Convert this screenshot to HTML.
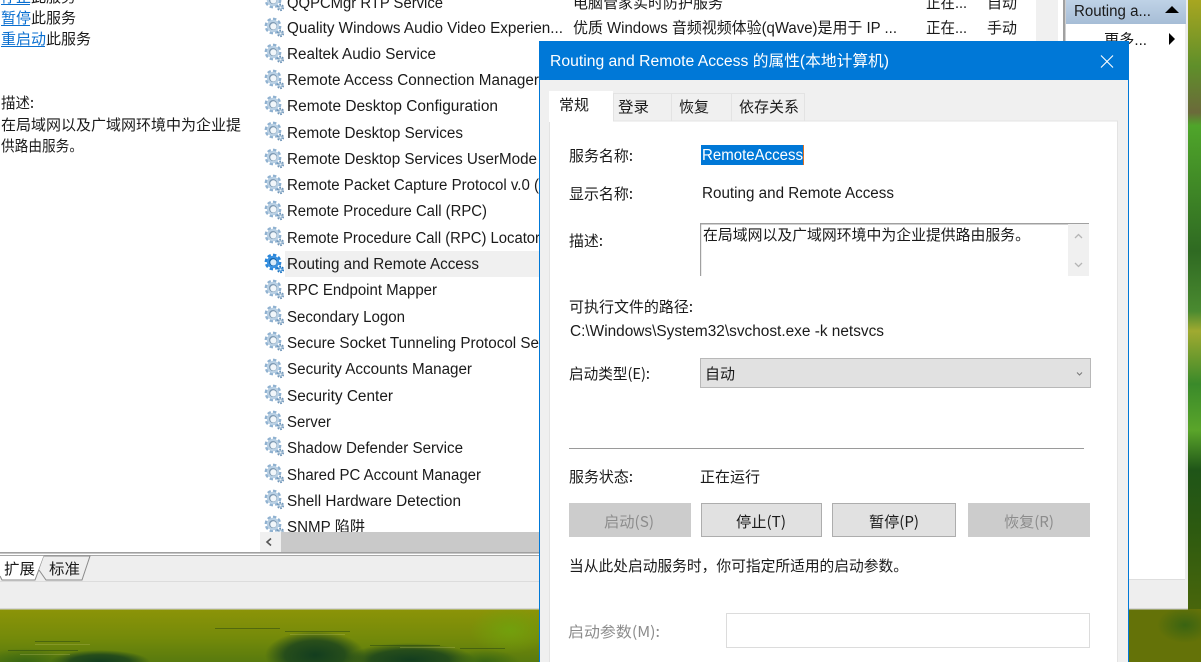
<!DOCTYPE html>
<html lang="zh-CN"><head><meta charset="utf-8"><title>Routing and Remote Access</title>
<style>
html,body{margin:0;padding:0;width:1201px;height:662px;overflow:hidden;background:#fff}
svg{display:block}
text{font-family:"Liberation Sans","Noto Sans CJK SC",sans-serif;font-size:15.5px;fill:#1a1a1a}
.c{font-family:"Noto Sans CJK SC","Liberation Sans",sans-serif;font-size:15px}
.g{fill:#8c8c8c}
.l{fill:#0a6fd0}
</style></head><body>
<svg width="1201" height="662" viewBox="0 0 1201 662" xmlns="http://www.w3.org/2000/svg">
<defs>
<linearGradient id="gr" x1="0" y1="0" x2="0" y2="1">
<stop offset="0" stop-color="#a8a620"/><stop offset=".1" stop-color="#5f8f2a"/><stop offset=".17" stop-color="#6b6a3a"/><stop offset=".19" stop-color="#4fa52a"/><stop offset=".38" stop-color="#2f6a22"/><stop offset=".47" stop-color="#4a8a30"/><stop offset=".5" stop-color="#a0aa30"/><stop offset=".58" stop-color="#3a8a2a"/><stop offset=".65" stop-color="#5aa52a"/><stop offset=".71" stop-color="#1f5518"/><stop offset=".8" stop-color="#2d5a10"/><stop offset="1" stop-color="#5a6d08"/>
</linearGradient>
<linearGradient id="gb" x1="0" y1="0" x2="0" y2="1"><stop offset="0" stop-color="#8c9408"/><stop offset=".55" stop-color="#748a0a"/><stop offset="1" stop-color="#587a0e"/></linearGradient>
<linearGradient id="hd" x1="0" y1="0" x2="0" y2="1"><stop offset="0" stop-color="#bfd2e6"/><stop offset="1" stop-color="#a6bdd6"/></linearGradient>
<radialGradient id="dk"><stop offset="0" stop-color="#0f3a20" stop-opacity=".95"/><stop offset=".6" stop-color="#123c1f" stop-opacity=".75"/><stop offset="1" stop-color="#123c1f" stop-opacity="0"/></radialGradient>
<radialGradient id="md"><stop offset="0" stop-color="#2f6014" stop-opacity=".8"/><stop offset="1" stop-color="#2f6014" stop-opacity="0"/></radialGradient>
<radialGradient id="br"><stop offset="0" stop-color="#72a00c"/><stop offset="1" stop-color="#72a00c" stop-opacity="0"/></radialGradient>
<filter id="s" x="-10%" y="-10%" width="120%" height="120%"><feGaussianBlur stdDeviation="0.35"/></filter>
<g id="gear" filter="url(#s)">
<circle cx="9" cy="9" r="6.8" fill="none" stroke="#8fb1d0" stroke-width="3.2" stroke-dasharray="3.2 2.1"/>
<circle cx="9" cy="9" r="6.2" fill="#b9d0e4"/>
<circle cx="9" cy="9" r="4" fill="#7f9ab3"/>
<circle cx="9.4" cy="9.4" r="3.1" fill="#f1f6fa"/>
<circle cx="16.5" cy="16.5" r="2.6" fill="none" stroke="#6f95b8" stroke-width="2" stroke-dasharray="1.6 1.1"/>
<circle cx="16.5" cy="16.5" r="2.2" fill="#98b6d0"/>
<circle cx="16.5" cy="16.5" r="1" fill="#eaf1f7"/>
</g>
<g id="gearb" filter="url(#s)">
<circle cx="9" cy="9" r="6.8" fill="none" stroke="#2a86d9" stroke-width="3.2" stroke-dasharray="3.2 2.1"/>
<circle cx="9" cy="9" r="6.2" fill="#3a93e2"/>
<circle cx="9" cy="9" r="4" fill="#1566ae"/>
<circle cx="9.4" cy="9.4" r="3.1" fill="#d8ebfa"/>
<circle cx="16.5" cy="16.5" r="2.6" fill="none" stroke="#1f72bd" stroke-width="2" stroke-dasharray="1.6 1.1"/>
<circle cx="16.5" cy="16.5" r="2.2" fill="#4595da"/>
<circle cx="16.5" cy="16.5" r="1" fill="#e0effa"/>
</g>
<clipPath id="list"><rect x="260" y="0" width="800" height="532"/></clipPath>
<clipPath id="wall"><rect x="0" y="609" width="1201" height="53"/></clipPath>
</defs>

<!-- wallpaper -->
<rect x="1180" y="0" width="21" height="662" fill="url(#gr)"/>
<rect x="0" y="609" width="540" height="53" fill="url(#gb)"/>
<rect x="1129" y="609" width="72" height="53" fill="#647208"/>
<g clip-path="url(#wall)">
<ellipse cx="100" cy="662" rx="50" ry="12" fill="url(#dk)"/>
<ellipse cx="315" cy="655" rx="50" ry="24" fill="url(#dk)"/>
<ellipse cx="410" cy="660" rx="65" ry="17" fill="url(#dk)"/>
<ellipse cx="485" cy="662" rx="35" ry="12" fill="url(#md)"/>
<ellipse cx="25" cy="662" rx="45" ry="14" fill="url(#md)"/>
<ellipse cx="510" cy="630" rx="40" ry="24" fill="url(#br)"/>
<ellipse cx="1185" cy="625" rx="28" ry="18" fill="url(#md)"/>
<g fill="#1e3d14" opacity=".45">
<rect x="35" y="641" width="45" height="1"/><rect x="8" y="650" width="70" height="1"/>
<rect x="285" y="631" width="65" height="1"/><rect x="215" y="628" width="65" height="1"/>
<rect x="370" y="645" width="70" height="1"/><rect x="460" y="648" width="45" height="1"/>
</g>
<g fill="#b9c06a" opacity=".3">
<rect x="35" y="644" width="55" height="1"/><rect x="290" y="634" width="55" height="1"/><rect x="400" y="647" width="55" height="1"/><rect x="20" y="654" width="50" height="1"/>
</g>
</g>

<!-- main window -->
<rect x="0" y="0" width="1185" height="609" fill="#fff"/>
<rect x="1185" y="0" width="3" height="609" fill="#ececec"/>
<rect x="1036" y="0" width="22" height="552" fill="#f0f0f0"/>
<rect x="1063" y="0" width="2.500" height="582" fill="#a0a0a0"/>
<rect x="1066" y="0" width="120" height="24" fill="url(#hd)"/>

<!-- left panel -->
<text x="1" y="2" class="c" textLength="75" lengthAdjust="spacingAndGlyphs"><tspan class="l">停止</tspan>此服务</text>
<rect x="1" y="4" width="29" height="1" fill="#0a6fd0"/>
<text x="1" y="23" class="c" textLength="75" lengthAdjust="spacingAndGlyphs"><tspan class="l">暂停</tspan>此服务</text>
<rect x="1" y="25" width="29" height="1" fill="#0a6fd0"/>
<text x="1" y="44" class="c" textLength="90" lengthAdjust="spacingAndGlyphs"><tspan class="l">重启动</tspan>此服务</text>
<rect x="1" y="46" width="44" height="1" fill="#0a6fd0"/>
<text x="1" y="108" class="c" textLength="33" lengthAdjust="spacingAndGlyphs">描述:</text>
<text x="1" y="130" class="c" textLength="240" lengthAdjust="spacingAndGlyphs">在局域网以及广域网环境中为企业提</text>
<text x="1" y="151" class="c" textLength="82" lengthAdjust="spacingAndGlyphs">供路由服务。</text>

<!-- list -->
<g clip-path="url(#list)">
<rect x="285" y="251" width="260" height="26" fill="#f0f0f0"/>
<use href="#gear" x="264" y="-9"/><use href="#gear" x="264" y="17"/><use href="#gear" x="264" y="43"/><use href="#gear" x="264" y="69"/><use href="#gear" x="264" y="95"/><use href="#gear" x="264" y="121"/><use href="#gear" x="264" y="148"/><use href="#gear" x="264" y="174"/><use href="#gear" x="264" y="200"/><use href="#gear" x="264" y="226"/><use href="#gearb" x="264" y="253"/><use href="#gear" x="264" y="279"/><use href="#gear" x="264" y="305"/><use href="#gear" x="264" y="331"/><use href="#gear" x="264" y="358"/><use href="#gear" x="264" y="384"/><use href="#gear" x="264" y="410"/><use href="#gear" x="264" y="436"/><use href="#gear" x="264" y="463"/><use href="#gear" x="264" y="489"/><use href="#gear" x="264" y="515"/>
<text x="287" y="8" textLength="156" lengthAdjust="spacingAndGlyphs">QQPCMgr RTP Service</text>
<text x="287" y="33" textLength="276" lengthAdjust="spacingAndGlyphs">Quality Windows Audio Video Experien...</text>
<text x="287" y="59" textLength="149" lengthAdjust="spacingAndGlyphs">Realtek Audio Service</text>
<text x="287" y="85" textLength="252" lengthAdjust="spacingAndGlyphs">Remote Access Connection Manager</text>
<text x="287" y="111" textLength="211" lengthAdjust="spacingAndGlyphs">Remote Desktop Configuration</text>
<text x="287" y="138" textLength="176" lengthAdjust="spacingAndGlyphs">Remote Desktop Services</text>
<text x="287" y="164" textLength="250" lengthAdjust="spacingAndGlyphs">Remote Desktop Services UserMode</text>
<text x="287" y="190" textLength="252" lengthAdjust="spacingAndGlyphs">Remote Packet Capture Protocol v.0 (</text>
<text x="287" y="216" textLength="200" lengthAdjust="spacingAndGlyphs">Remote Procedure Call (RPC)</text>
<text x="287" y="243" textLength="253" lengthAdjust="spacingAndGlyphs">Remote Procedure Call (RPC) Locator</text>
<text x="287" y="269" textLength="192" lengthAdjust="spacingAndGlyphs">Routing and Remote Access</text>
<text x="287" y="295" textLength="150" lengthAdjust="spacingAndGlyphs">RPC Endpoint Mapper</text>
<text x="287" y="322" textLength="118" lengthAdjust="spacingAndGlyphs">Secondary Logon</text>
<text x="287" y="348" textLength="252" lengthAdjust="spacingAndGlyphs">Secure Socket Tunneling Protocol Se</text>
<text x="287" y="374" textLength="185" lengthAdjust="spacingAndGlyphs">Security Accounts Manager</text>
<text x="287" y="401" textLength="106" lengthAdjust="spacingAndGlyphs">Security Center</text>
<text x="287" y="427" textLength="44" lengthAdjust="spacingAndGlyphs">Server</text>
<text x="287" y="453" textLength="176" lengthAdjust="spacingAndGlyphs">Shadow Defender Service</text>
<text x="287" y="480" textLength="194" lengthAdjust="spacingAndGlyphs">Shared PC Account Manager</text>
<text x="287" y="506" textLength="174" lengthAdjust="spacingAndGlyphs">Shell Hardware Detection</text>
<text x="287" y="532" textLength="78" lengthAdjust="spacingAndGlyphs">SNMP 陷阱</text>
<text x="573" y="8" class="c" textLength="150" lengthAdjust="spacingAndGlyphs">电脑管家实时防护服务</text>
<text x="573" y="33" textLength="324" lengthAdjust="spacingAndGlyphs">优质 Windows 音频视频体验(qWave)是用于 IP ...</text>
<text x="926" y="8" textLength="41" lengthAdjust="spacingAndGlyphs">正在...</text>
<text x="926" y="33" textLength="41" lengthAdjust="spacingAndGlyphs">正在...</text>
<text x="987" y="8" class="c" textLength="30" lengthAdjust="spacingAndGlyphs">自动</text>
<text x="987" y="33" class="c" textLength="30" lengthAdjust="spacingAndGlyphs">手动</text>
</g>

<!-- h scrollbar -->
<rect x="260" y="532" width="800" height="20" fill="#c9c9c9"/>
<rect x="260" y="532" width="21" height="20" fill="#f0f0f0"/>
<path d="M271 538.500l-4 3.500 4 3.500" fill="none" stroke="#555" stroke-width="1.600"/>

<!-- tabs & status -->
<rect x="0" y="552" width="1060" height="1.600" fill="#a0a0a0"/>
<rect x="0" y="555" width="1060" height="1" fill="#a8a8a8"/>
<rect x="0" y="556" width="1060" height="25" fill="#eeeeee"/>
<rect x="0" y="581" width="1129" height="1" fill="#dcdcdc"/>
<rect x="0" y="582" width="1129" height="27" fill="#eeeeee"/>
<rect x="1129" y="579" width="56" height="1" fill="#dedede"/>
<rect x="1129" y="580" width="59" height="29" fill="#eeeeee"/>
<rect x="0" y="608" width="1188" height="1.500" fill="#d6d6d6"/>
<path d="M0 556H44L35 580H2L0 577Z" fill="#fff"/>
<path d="M0 576L2 580H35L44 556" fill="none" stroke="#8a8a8a"/>
<path d="M44 556H90L82 580H46L39 570" fill="#eeeeee" stroke="#8a8a8a"/>
<text x="4" y="574" class="c" textLength="31" lengthAdjust="spacingAndGlyphs">扩展</text>
<text x="49" y="574" class="c" textLength="31" lengthAdjust="spacingAndGlyphs">标准</text>

<!-- action pane -->
<text x="1074" y="16" textLength="77" lengthAdjust="spacingAndGlyphs">Routing a...</text>
<path d="M1165 13l7-7 7 7Z" fill="#000"/>
<text x="1104" y="45" textLength="43" lengthAdjust="spacingAndGlyphs">更多...</text>
<path d="M1169 33l6 6-6 6Z" fill="#000"/>

<!-- dialog -->
<rect x="539" y="41" width="590" height="621" fill="#f0f0f0"/>
<rect x="539" y="41" width="1" height="621" fill="#0078d7"/>
<rect x="1128" y="41" width="1" height="621" fill="#0078d7"/>
<rect x="539" y="41" width="590" height="39" fill="#0078d7"/>
<text x="550" y="66" textLength="339" lengthAdjust="spacingAndGlyphs" style="fill:#fff">Routing and Remote Access 的属性(本地计算机)</text>
<path d="M1101 55.500l12 12M1113 55.500l-12 12" stroke="#fff" stroke-width="1.100" fill="none"/>

<rect x="549" y="121" width="569" height="541" fill="#fff"/>
<rect x="549" y="120.500" width="569" height="1" fill="#e3e3e3"/>
<rect x="1117" y="121" width="1" height="541" fill="#e3e3e3"/>
<rect x="549" y="121" width="1" height="541" fill="#e3e3e3"/>
<rect x="549" y="91" width="64" height="31" fill="#fff"/>
<rect x="613" y="94" width="1" height="27" fill="#e3e3e3"/>
<rect x="671" y="94" width="1" height="27" fill="#e3e3e3"/>
<rect x="731" y="94" width="1" height="27" fill="#e3e3e3"/>
<rect x="804" y="94" width="1" height="27" fill="#e3e3e3"/>
<rect x="613" y="93" width="192" height="1" fill="#e3e3e3"/>
<text x="559" y="110" class="c" textLength="30" lengthAdjust="spacingAndGlyphs">常规</text>
<text x="618" y="112" class="c" textLength="31" lengthAdjust="spacingAndGlyphs">登录</text>
<text x="679" y="112" class="c" textLength="30" lengthAdjust="spacingAndGlyphs">恢复</text>
<text x="739" y="112" class="c" textLength="60" lengthAdjust="spacingAndGlyphs">依存关系</text>

<text x="569" y="161" class="c" textLength="64" lengthAdjust="spacingAndGlyphs">服务名称:</text>
<rect x="701" y="145" width="102" height="20" fill="#0078d7"/>
<rect x="803" y="145" width="1" height="20" fill="#e07020"/>
<text x="702" y="160" textLength="101" lengthAdjust="spacingAndGlyphs" style="fill:#fff">RemoteAccess</text>
<text x="569" y="199" class="c" textLength="64" lengthAdjust="spacingAndGlyphs">显示名称:</text>
<text x="702" y="198" textLength="192" lengthAdjust="spacingAndGlyphs">Routing and Remote Access</text>
<text x="569" y="246" class="c" textLength="34" lengthAdjust="spacingAndGlyphs">描述:</text>

<rect x="700" y="223" width="389" height="1.500" fill="#a0a0a0"/>
<rect x="700" y="223" width="1.200" height="53" fill="#a0a0a0"/>
<rect x="1068" y="224" width="21" height="52" fill="#f0f0f0"/>
<path d="M1075 238l3.500-3.500 3.500 3.500M1075 263l3.500 3.500 3.500-3.500" fill="none" stroke="#b5b5b5" stroke-width="1.300"/>
<text x="703" y="240" class="c" textLength="327" lengthAdjust="spacingAndGlyphs">在局域网以及广域网环境中为企业提供路由服务。</text>

<text x="569" y="312" class="c" textLength="124" lengthAdjust="spacingAndGlyphs">可执行文件的路径:</text>
<text x="570" y="336" textLength="314" lengthAdjust="spacingAndGlyphs">C:\Windows\System32\svchost.exe -k netsvcs</text>
<text x="569" y="379" class="c" textLength="81" lengthAdjust="spacingAndGlyphs">启动类型(E):</text>
<rect x="700.500" y="358.500" width="390" height="29" fill="#e1e1e1" stroke="#b8b8b8"/>
<text x="705" y="379" class="c" textLength="30" lengthAdjust="spacingAndGlyphs">自动</text>
<path d="M1077 372.500l2.500 2.500 2.500-2.500" fill="none" stroke="#777" stroke-width="1"/>

<rect x="569" y="448" width="515" height="1" fill="#9a9a9a"/>
<text x="569" y="482" class="c" textLength="64" lengthAdjust="spacingAndGlyphs">服务状态:</text>
<text x="700" y="482" class="c" textLength="60" lengthAdjust="spacingAndGlyphs">正在运行</text>

<rect x="569" y="503" width="122" height="34" fill="#cccccc"/>
<rect x="701.500" y="503.500" width="120" height="33" fill="#e1e1e1" stroke="#adadad"/>
<rect x="832.500" y="503.500" width="123" height="33" fill="#e1e1e1" stroke="#adadad"/>
<rect x="968" y="503" width="122" height="34" fill="#cccccc"/>
<text x="604" y="527" class="c g" textLength="50" lengthAdjust="spacingAndGlyphs">启动(S)</text>
<text x="736" y="527" class="c" textLength="50" lengthAdjust="spacingAndGlyphs">停止(T)</text>
<text x="869" y="527" class="c" textLength="50" lengthAdjust="spacingAndGlyphs">暂停(P)</text>
<text x="1004" y="527" class="c g" textLength="50" lengthAdjust="spacingAndGlyphs">恢复(R)</text>

<text x="569" y="571" class="c" textLength="339" lengthAdjust="spacingAndGlyphs">当从此处启动服务时，你可指定所适用的启动参数。</text>
<text x="568" y="637" class="c g" textLength="92" lengthAdjust="spacingAndGlyphs">启动参数(M):</text>
<rect x="726.500" y="613.500" width="363" height="34" fill="#fff" stroke="#dcdcdc"/>
</svg>
</body></html>
